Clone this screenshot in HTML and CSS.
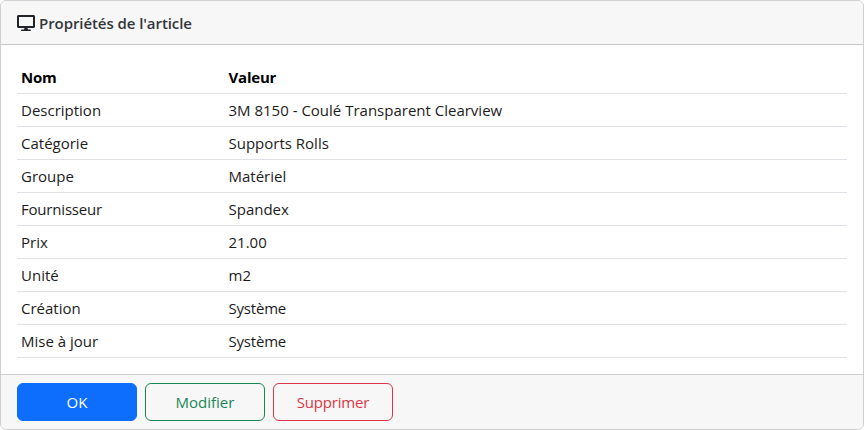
FILE: index.html
```html
<!DOCTYPE html>
<html lang="fr">
<head>
<meta charset="utf-8">
<title>Propriétés de l'article</title>
<link rel="stylesheet" href="styles.css">
</head>
<body>
<div class="card">
  <div class="card-header">
    <svg class="icon" viewBox="0 0 576 512" aria-hidden="true"><path fill="currentColor" d="M528 0H48C21.500 0 0 21.500 0 48v320c0 26.500 21.500 48 48 48h192l-16 48h-72c-13.300 0-24 10.700-24 24s10.700 24 24 24h272c13.300 0 24-10.700 24-24s-10.700-24-24-24h-72l-16-48h192c26.500 0 48-21.500 48-48V48c0-26.500-21.500-48-48-48zm-16 352H64V64h448v288z"/></svg>
    <span class="title">Propriétés de l'article</span>
  </div>
  <div class="card-body">
    <table class="table">
      <thead><tr><th class="name">Nom</th><th>Valeur</th></tr></thead>
      <tbody>
        <tr><td>Description</td><td>3M 8150 - Coulé Transparent Clearview</td></tr>
        <tr><td>Catégorie</td><td>Supports Rolls</td></tr>
        <tr><td>Groupe</td><td>Matériel</td></tr>
        <tr><td class="tight">Fournisseur</td><td>Spandex</td></tr>
        <tr><td>Prix</td><td>21.00</td></tr>
        <tr><td>Unité</td><td>m2</td></tr>
        <tr><td>Création</td><td class="tight">Système</td></tr>
        <tr><td>Mise à jour</td><td class="tight">Système</td></tr>
      </tbody>
    </table>
  </div>
  <div class="card-footer">
    <button class="btn primary">OK</button>
    <button class="btn success">Modifier</button>
    <button class="btn danger tight">Supprimer</button>
  </div>
</div>
</body>
</html>
```
FILE: styles.css
```css
* { box-sizing: border-box; }
body {
  margin: 0;
  font: 400 15px/24px "Open Sans", sans-serif;
  color: #212529;
  background: #fff;
}
.card {
  display: flex;
  flex-direction: column;
  height: 430px;
  border: 1px solid #cfcfcf;
  border-radius: 6px;
  overflow: hidden;
}
.card-header {
  display: flex;
  align-items: center;
  gap: 4px;
  height: 44px;
  padding: 2px 16px 0;
  background: #f7f7f7;
  border-bottom: 1px solid #c8c8c8;
}
.icon { width: 18px; height: 16px; }
.title { font-weight: 600; letter-spacing: -0.07px; color: #32363a; }
.card-body { flex: 1; padding: 16px; }
.table { width: 100%; border-collapse: collapse; table-layout: fixed; color: #1c1c1c; }
.table th, .table td {
  height: 33px;
  padding: 4px;
  text-align: left;
  border-bottom: 1px solid #dee2e6;
}
.table th { font-weight: 700; letter-spacing: -0.2px; color: #000; }
.name { width: 25%; }
.card-footer {
  display: flex;
  gap: 8px;
  height: 55px;
  padding: 8px 16px;
  background: #f7f7f7;
  border-top: 1px solid #cfcfcf;
}
.btn {
  width: 120px;
  height: 38px;
  padding: 0;
  font: inherit;
  border: 1px solid;
  border-radius: 6px;
  background: transparent;
}
.tight { letter-spacing: -0.2px; }
.primary { color: #fff; background: #0d6efd; border-color: #0d6efd; }
.success { color: #198754; }
.danger { color: #dc3545; }
```
